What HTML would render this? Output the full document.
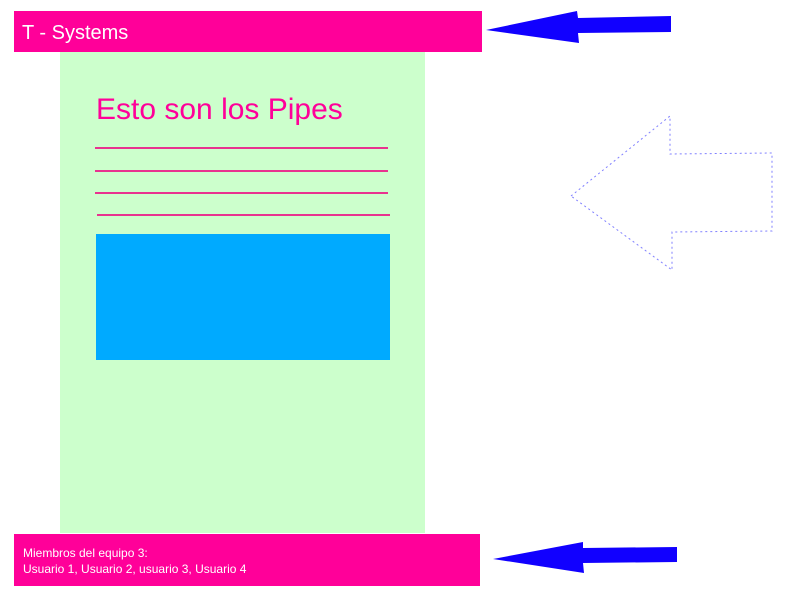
<!DOCTYPE html>
<html><head><style>
body{margin:0;width:800px;height:600px;background:#fff;position:relative;overflow:hidden;font-family:"Liberation Sans",sans-serif}
div{position:absolute}
</style></head><body>
<div style="left:14px;top:11px;width:468px;height:41px;background:#ff0099"></div>
<div style="left:22px;top:22px;color:#fff;font-size:20px">T - Systems</div>
<div style="left:60px;top:52px;width:365px;height:481px;background:#ccffcc"></div>
<div style="left:96px;top:93px;color:#ff0099;font-size:30px">Esto son los Pipes</div>
<div style="left:95px;top:147px;width:293px;height:2px;background:#e8338f"></div>
<div style="left:95px;top:170px;width:293px;height:2px;background:#e8338f"></div>
<div style="left:95px;top:192px;width:293px;height:2px;background:#e8338f"></div>
<div style="left:97px;top:214px;width:293px;height:2px;background:#e8338f"></div>
<div style="left:96px;top:234px;width:294px;height:126px;background:#00aaff"></div>
<div style="left:14px;top:534px;width:466px;height:52px;background:#ff0099"></div>
<div style="left:23px;top:545px;color:#fff;font-size:12px;line-height:16px">Miembros del equipo 3:<br>Usuario 1, Usuario 2, usuario 3, Usuario 4</div>
<svg width="800" height="600" style="position:absolute;left:0;top:0">
<polygon points="486,30 577,11 578,18 671,16 671,32 578,33 579,43" fill="#1100ff"/>
<polygon points="493,559 583,542 583,548 677,547 677,562 583,563 584,573" fill="#1100ff"/>
<polygon points="571,196 670,116 670,154 772,153 772,231 672,232 672,270" fill="none" stroke="#8080ff" stroke-width="1" stroke-dasharray="2,3"/>
</svg>
</body></html>
